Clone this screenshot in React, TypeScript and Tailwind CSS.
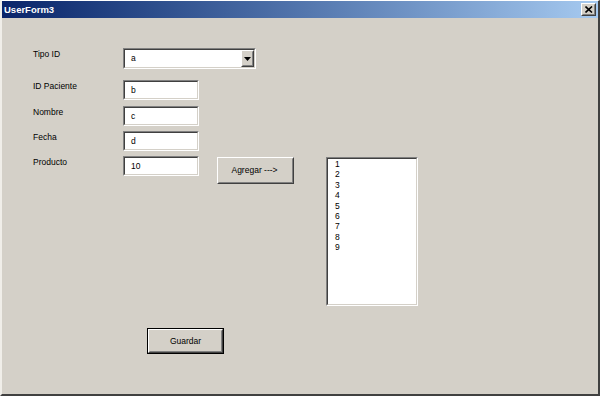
import React from "react";

const font = { fontFamily: '"Liberation Sans", Arial, sans-serif' };

function Sunken({ className, children }: { className: string; children?: React.ReactNode }) {
  return (
    <div className={`border border-t-[#808080] border-l-[#808080] border-b-[#ffffff] border-r-[#ffffff] ${className}`}>
      <div className="w-full h-full border border-t-[#404040] border-l-[#404040] border-b-[#d4d0c8] border-r-[#d4d0c8] bg-white">
        {children}
      </div>
    </div>
  );
}

function TextBox({ value }: { value: string }) {
  return (
    <Sunken className="w-[76px] h-[20px]">
      <div className="h-full flex items-center pl-[6px] text-[8.5px] text-black leading-none">{value}</div>
    </Sunken>
  );
}

function Raised({ className, children }: { className: string; children?: React.ReactNode }) {
  return (
    <div className={`border border-t-[#ffffff] border-l-[#ffffff] border-b-[#404040] border-r-[#404040] ${className}`}>
      <div className="w-full h-full border border-t-[#d4d0c8] border-l-[#d4d0c8] border-b-[#808080] border-r-[#808080] bg-[#d4d0c8] flex items-center justify-center">
        {children}
      </div>
    </div>
  );
}

function Row({ label, children, className }: { label: string; children: React.ReactNode; className: string }) {
  return (
    <div className={`flex items-start ${className}`}>
      <div className="w-[90px] text-[8.5px] leading-[12px] text-black">{label}</div>
      {children}
    </div>
  );
}

export default function App() {
  return (
    <div
      style={font}
      className="w-[600px] h-[396px] bg-[#d4d0c8] border-t border-t-[#ffffff] border-l-2 border-l-[#f0eee9] border-r-2 border-r-[#404040] border-b-2 border-b-[#404040] flex flex-col overflow-hidden"
    >
      <div className="h-[17px] shrink-0 bg-gradient-to-r from-[#0a246a] to-[#a6caf0] flex items-center justify-between pl-[2px] pr-[2px]">
        <span className="text-white font-bold text-[9.5px] leading-none">UserForm3</span>
        <Raised className="w-[15px] h-[13px]">
          <svg width="8" height="7" viewBox="0 0 8 7">
            <path d="M0.5 0.5 L7 6.5 M7 0.5 L0.5 6.5" stroke="#000" strokeWidth="1.6" />
          </svg>
        </Raised>
      </div>

      <div className="flex-1 flex flex-col pl-[31px] pt-[30px]">
        <Row label="Tipo ID" className="">
          <Sunken className="w-[133px] h-[21px]">
            <div className="h-full flex items-center justify-between">
              <span className="pl-[6px] text-[8.5px] leading-none">a</span>
              <Raised className="w-[13px] h-full">
                <svg width="7" height="4" viewBox="0 0 7 4">
                  <path d="M0 0 H7 L3.5 4 Z" fill="#000" />
                </svg>
              </Raised>
            </div>
          </Sunken>
        </Row>
        <Row label="ID Paciente" className="mt-[11px]">
          <TextBox value="b" />
        </Row>
        <Row label="Nombre" className="mt-[6px]">
          <TextBox value="c" />
        </Row>
        <Row label="Fecha" className="mt-[5px]">
          <TextBox value="d" />
        </Row>
        <div className="flex items-start mt-[5px]">
          <Row label="Producto" className="">
            <TextBox value="10" />
          </Row>
          <Raised className="ml-[18px] mt-[1px] w-[77px] h-[27px]">
            <span className="text-[8.5px] leading-none text-black pr-[2px]">Agregar ---&gt;</span>
          </Raised>
          <Sunken className="ml-[32px] mt-[1px] w-[92px] h-[149px]">
            <div className="pl-[7px] pt-0 text-[8.5px] leading-[10.4px] text-black">
              {["1", "2", "3", "4", "5", "6", "7", "8", "9"].map((n) => (
                <div key={n}>{n}</div>
              ))}
            </div>
          </Sunken>
        </div>
        <div className="ml-[114px] mt-[22px] w-[77px] h-[26px] border border-black">
          <Raised className="w-full h-full">
            <span className="text-[8.5px] leading-none text-black">Guardar</span>
          </Raised>
        </div>
      </div>
    </div>
  );
}
